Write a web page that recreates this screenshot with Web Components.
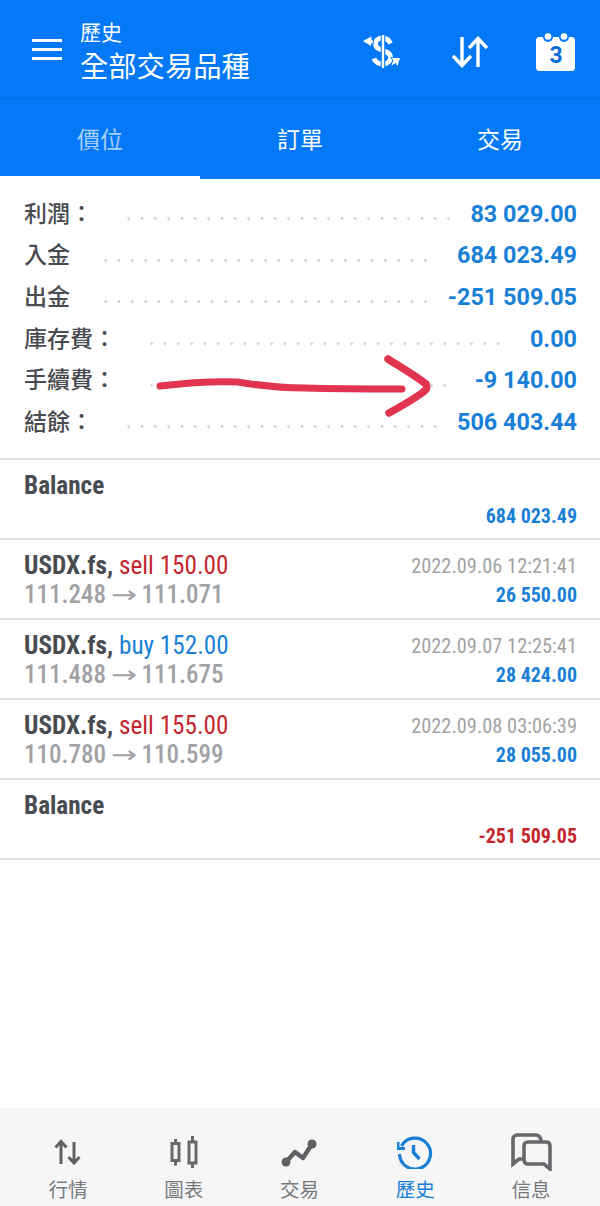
<!DOCTYPE html>
<html>
<head>
<meta charset="utf-8">
<style>
    html, body { margin: 0; padding: 0; background: #fff; }
    body { font-family: "Noto Sans CJK TC", Roboto, sans-serif; }
</style>
</head>
<body>
<trade-app>
    <app-header slot="header" sub="歷史" title="全部交易品種"></app-header>
    <tab-bar slot="tabs" items="價位,訂單,交易" active="0"></tab-bar>

    <summary-row label="利潤：" value="83 029.00"></summary-row>
    <summary-row label="入金" value="684 023.49"></summary-row>
    <summary-row label="出金" value="-251 509.05"></summary-row>
    <summary-row label="庫存費：" value="0.00"></summary-row>
    <summary-row label="手續費：" value="-9 140.00"></summary-row>
    <summary-row label="結餘：" value="506 403.44"></summary-row>
    <list-gap></list-gap>

    <balance-row amount="684 023.49"></balance-row>
    <deal-row side="sell" lots="150.00" prices="111.248 → 111.071" time="2022.09.06 12:21:41" amount="26 550.00"></deal-row>
    <deal-row side="buy" lots="152.00" prices="111.488 → 111.675" time="2022.09.07 12:25:41" amount="28 424.00"></deal-row>
    <deal-row side="sell" lots="155.00" prices="110.780 → 110.599" time="2022.09.08 03:06:39" amount="28 055.00"></deal-row>
    <balance-row amount="-251 509.05" negative></balance-row>

    <bottom-nav slot="nav"></bottom-nav>
    <red-arrow slot="overlay"></red-arrow>
</trade-app>

<script>
const NARROW = `"Roboto Condensed", Roboto, "Liberation Sans", sans-serif`;

class TradeApp extends HTMLElement {
    constructor() {
        super();
        this.attachShadow({ mode: "open" });
    }

    connectedCallback() {
        this.shadowRoot.innerHTML = `
            <style>
                :host { display: flex; flex-direction: column; height: 1206px; position: relative; overflow: hidden; }
                main { flex: 1; min-height: 0; padding-top: 14px; }
            </style>
            <slot name="header"></slot>
            <slot name="tabs"></slot>
            <main><slot></slot></main>
            <slot name="nav"></slot>
            <slot name="overlay"></slot>
        `;
    }
}

class AppHeader extends HTMLElement {
    constructor() {
        super();
        this.attachShadow({ mode: "open" });
    }

    connectedCallback() {
        this.shadowRoot.innerHTML = `
            <style>
                :host { display: flex; align-items: center; height: 98px; background: #0379f7; border-bottom: 1px solid #056cdc; color: #fff; }
                .menu { display: flex; flex-direction: column; gap: 6px; margin: 0 19px 0 32px; }
                .menu i { display: block; width: 30px; height: 3px; background: #fff; }
                .titles { flex: 1; display: flex; flex-direction: column; padding-top: 3px; }
                .sub { font-size: 21px; line-height: 28px; margin-left: -1px; }
                .title { font-size: 28.300px; line-height: 40px; margin-left: -1px; }
                .icons { display: flex; align-items: center; margin-right: 24px; padding-top: 6px; }
                svg { display: block; }
                .cal { position: relative; width: 40px; height: 40px; margin-left: 46px; }
                .cal span { position: absolute; left: 0; right: 0; top: 9px; text-align: center; font: 700 23px/30px Roboto, sans-serif; color: #0a6fd8; }
            </style>
            <div class="menu"><i></i><i></i><i></i></div>
            <div class="titles">
                <div class="sub">${this.getAttribute("sub")}</div>
                <div class="title">${this.getAttribute("title")}</div>
            </div>
            <div class="icons">
                <svg width="44" height="42" viewBox="0 0 44 42" fill="none" stroke="#fff" style="margin-top:-6px">
                    <path d="M30.500 15.500C29 12 26 10 22.500 10C18.500 10 15.500 12 15.500 16C15.500 23.500 30.500 21 30.500 29.500C30.500 33.500 27 36 23 36C19 36 15 34 14 30.500" stroke-width="4.800"/>
                    <path d="M23 7V40" stroke="#0379f7" stroke-width="4.600"/>
                    <path d="M23 7V40" stroke-width="2.400"/>
                    <path d="M3 13L11.500 8.500L11.300 11.500C12.500 12 13.500 13 13.500 15C12.800 15 12 15.200 11 15.500L11 18Z" fill="#fff" stroke="#0379f7" stroke-width="1.600" paint-order="stroke"/>
                    <path d="M40 30L31.500 30L33.500 32.500C32.500 34 32 36 31.500 38C33 36.500 34.500 35.500 35.500 35L37.500 38Z" fill="#fff" stroke="#0379f7" stroke-width="1.600" paint-order="stroke"/>
                </svg>
                <svg style="margin-left:46px" width="40" height="32" viewBox="0 0 40 32" fill="none" stroke="#fff" stroke-width="3.400">
                    <path d="M12 1V29M3 20L12 29.500L21 20"/>
                    <path d="M28 31V3M19 12L28 2.500L37 12"/>
                </svg>
                <div class="cal">
                    <svg width="40" height="40" viewBox="0 0 40 40">
                        <path d="M3 5H36C37.500 5 39 6.500 39 8V36C39 37.500 37.500 39 36 39H3C1.500 39 0 37.500 0 36V8C0 6.500 1.500 5 3 5Z" fill="#fff"/>
                        <circle cx="12" cy="5" r="5" fill="#0379f7"/><circle cx="28" cy="5" r="5" fill="#0379f7"/>
                        <circle cx="12" cy="4.500" r="3.300" fill="#fff"/><circle cx="28" cy="4.500" r="3.300" fill="#fff"/>
                    </svg>
                    <span>3</span>
                </div>
            </div>
        `;
    }
}

class TabBar extends HTMLElement {
    constructor() {
        super();
        this.attachShadow({ mode: "open" });
    }

    connectedCallback() {
        const active = Number(this.getAttribute("active"));
        const tabs = this.getAttribute("items").split(",").map((name, i) =>
            `<div class="tab ${i === active ? "active" : ""}">${name}</div>`).join("");

        this.shadowRoot.innerHTML = `
            <style>
                :host { display: grid; grid-template-columns: repeat(3, 1fr); height: 80px; background: #0379f7; color: #fff; font-size: 23px; }
                .tab { display: flex; align-items: center; justify-content: center; padding-bottom: 2px; box-sizing: border-box; }
                .active { color: #a8d0fb; box-shadow: inset 0 -3px 0 #fff; }
            </style>
            ${tabs}
        `;
    }
}

class SummaryRow extends HTMLElement {
    constructor() {
        super();
        this.attachShadow({ mode: "open" });
    }

    connectedCallback() {
        this.shadowRoot.innerHTML = `
            <style>
                :host { display: flex; align-items: center; height: 41.6px; padding: 0 23px 0 24px; }
                .label { font-size: 23px; font-weight: 500; color: #484b50; white-space: nowrap; margin-top: -4px; }
                .dots { flex: 1; height: 3px; margin: 0 20px 0 29px; position: relative; top: 5px; background: radial-gradient(circle, #d4d5d7 1.300px, transparent 1.600px) left center / 13.340px 3px repeat-x; }
                .value { font: 700 23.400px Roboto, sans-serif; color: #1a7fd6; white-space: nowrap; }
            </style>
            <span class="label">${this.getAttribute("label")}</span>
            <span class="dots"></span>
            <span class="value">${this.getAttribute("value")}</span>
        `;
    }
}

class ListGap extends HTMLElement {
    constructor() {
        super();
        this.attachShadow({ mode: "open" });
        this.shadowRoot.innerHTML = `<style>:host { display: block; height: 15px; border-bottom: 2px solid #dedfe0; }</style>`;
    }
}

const ROW_STYLE = `
    :host { display: flex; justify-content: space-between; box-sizing: border-box; height: 80px; padding: 11px 23px 0 24px; border-bottom: 2px solid #dedfe0; font-family: ${NARROW}; font-stretch: condensed; }
    .col { display: flex; flex-direction: column; }
    .right { align-items: flex-end; }
    .name { font-size: 25.200px; font-weight: 700; line-height: 30px; color: #484b50; white-space: nowrap; }
    .amount { font-size: 20px; font-weight: 700; line-height: 28px; color: #1a7fd6; white-space: nowrap; }
    .neg { color: #c4262c; }
`;

class BalanceRow extends HTMLElement {
    constructor() {
        super();
        this.attachShadow({ mode: "open" });
    }

    connectedCallback() {
        const neg = this.hasAttribute("negative");
        this.shadowRoot.innerHTML = `
            <style>
                ${ROW_STYLE}
                .right { justify-content: flex-end; padding-bottom: 8px; }
            </style>
            <div class="col"><span class="name">Balance</span></div>
            <div class="col right"><span class="amount ${neg ? "neg" : ""}">${this.getAttribute("amount")}</span></div>
        `;
    }
}

class DealRow extends HTMLElement {
    constructor() {
        super();
        this.attachShadow({ mode: "open" });
    }

    connectedCallback() {
        const side = this.getAttribute("side");
        const prices = this.getAttribute("prices").replace("→", `<span class="arrow">→</span>`);
        this.shadowRoot.innerHTML = `
            <style>
                ${ROW_STYLE}
                .side { font-weight: 400; color: ${side === "sell" ? "#c4262c" : "#1a7fd6"}; }
                .prices { font-size: 25px; font-weight: 500; line-height: 28px; color: #a0a2a5; white-space: nowrap; }
                .arrow { display: inline-block; font: 400 24px/0 "DejaVu Sans", sans-serif; margin: 0 2px; transform: scaleX(1.3); }
                .time { font-size: 20.400px; line-height: 30px; color: #a3a3a3; white-space: nowrap; }
            </style>
            <div class="col">
                <span class="name">USDX.fs, <span class="side">${side} ${this.getAttribute("lots")}</span></span>
                <span class="prices">${prices}</span>
            </div>
            <div class="col right">
                <span class="time">${this.getAttribute("time")}</span>
                <span class="amount">${this.getAttribute("amount")}</span>
            </div>
        `;
    }
}

class NavItem extends HTMLElement {
    constructor() {
        super();
        this.attachShadow({ mode: "open" });
    }

    connectedCallback() {
        this.shadowRoot.innerHTML = `
            <style>
                :host { display: flex; flex-direction: column; align-items: center; color: #77797c; font-size: 19.500px; }
                :host([active]) { color: #1a7fd6; }
                .icon { height: 46px; display: flex; align-items: center; justify-content: center; }
                .text { line-height: 28px; }
            </style>
            <div class="icon"><slot></slot></div>
            <div class="text">${this.getAttribute("label")}</div>
        `;
    }
}

class BottomNav extends HTMLElement {
    constructor() {
        super();
        this.attachShadow({ mode: "open" });
    }

    connectedCallback() {
        this.shadowRoot.innerHTML = `
            <style>
                :host { display: grid; grid-template-columns: repeat(5, 1fr); height: 98px; box-sizing: border-box; padding: 21px 11px 0 10px; background: #f6f6f6; }
                svg { display: block; }
            </style>
            <nav-item label="行情">
                <svg width="28" height="26" viewBox="0 0 28 26" fill="none" stroke="#5f6164" stroke-width="3">
                    <path d="M7 25V3M1.500 8.500L7 2.500L12.500 8.500"/>
                    <path d="M20 3V24M14.500 18L20 24L25.500 18"/>
                </svg>
            </nav-item>
            <nav-item label="圖表">
                <svg width="28" height="32" viewBox="0 0 28 32" fill="none" stroke="#66686b" stroke-width="3">
                    <rect x="2" y="7.500" width="7" height="17"/><path d="M5.500 3V7M5.500 25V29.500"/>
                    <rect x="19" y="6" width="7" height="21"/><path d="M22.500 0V6M22.500 27V32"/>
                </svg>
            </nav-item>
            <nav-item label="交易">
                <svg width="36" height="30" viewBox="0 0 36 30">
                    <path d="M5 25L14 15L22 21L31 7" fill="none" stroke="#5f6164" stroke-width="4.500" stroke-linejoin="round"/>
                    <circle cx="5" cy="25" r="4.500" fill="#5f6164"/><circle cx="31" cy="7" r="4.500" fill="#5f6164"/>
                </svg>
            </nav-item>
            <nav-item label="歷史" active>
                <svg width="36" height="34" viewBox="0 0 36 34" fill="none" stroke="#1a7fd6" stroke-width="3.200">
                    <path d="M4.500 11A15.500 15.500 0 1 1 2.500 19"/>
                    <path d="M1 7V13.500H8" stroke-width="3"/>
                    <path d="M16.500 10V17.500L22.500 24" stroke-width="3.400"/>
                </svg>
            </nav-item>
            <nav-item label="信息">
                <svg width="42" height="38" viewBox="0 0 42 38" fill="none" stroke="#66686b" stroke-width="3.600">
                    <path d="M13 26H9L3 31V6C3 3.500 5 2 7 2H26C29 2 30.500 3.500 31 8"/>
                    <path d="M18 9H36C38.500 9 40 10.500 40 13V36L34 31H18C15.500 31 14 29.500 14 27V13C14 10.500 15.500 9 18 9Z"/>
                </svg>
            </nav-item>
        `;
    }
}

// hand drawn marker on top of the screenshot, white halo hides the dots under it
class RedArrow extends HTMLElement {
    constructor() {
        super();
        this.attachShadow({ mode: "open" });
        this.shadowRoot.innerHTML = `
            <style>:host { position: absolute; left: 0; top: 0; width: 600px; height: 1206px; pointer-events: none; }</style>
            <svg width="600" height="1206" fill="none" stroke-linecap="round" stroke-linejoin="round">
                <path d="M158 386H426" stroke="#fff" stroke-width="10"/>
                <g stroke="#e1354f">
                    <path d="M160 386C185 383 215 381 238 382C262 386 280 388 305 388C340 389 375 389 402 389" stroke-width="7"/>
                    <path d="M388 359C402 368 416 376 426 384C428 388 426 390 422 393C412 400 400 407 389 413" stroke-width="7.500"/>
                </g>
            </svg>
        `;
    }
}

customElements.define("trade-app", TradeApp);
customElements.define("app-header", AppHeader);
customElements.define("tab-bar", TabBar);
customElements.define("summary-row", SummaryRow);
customElements.define("list-gap", ListGap);
customElements.define("balance-row", BalanceRow);
customElements.define("deal-row", DealRow);
customElements.define("nav-item", NavItem);
customElements.define("bottom-nav", BottomNav);
customElements.define("red-arrow", RedArrow);
</script>
</body>
</html>
